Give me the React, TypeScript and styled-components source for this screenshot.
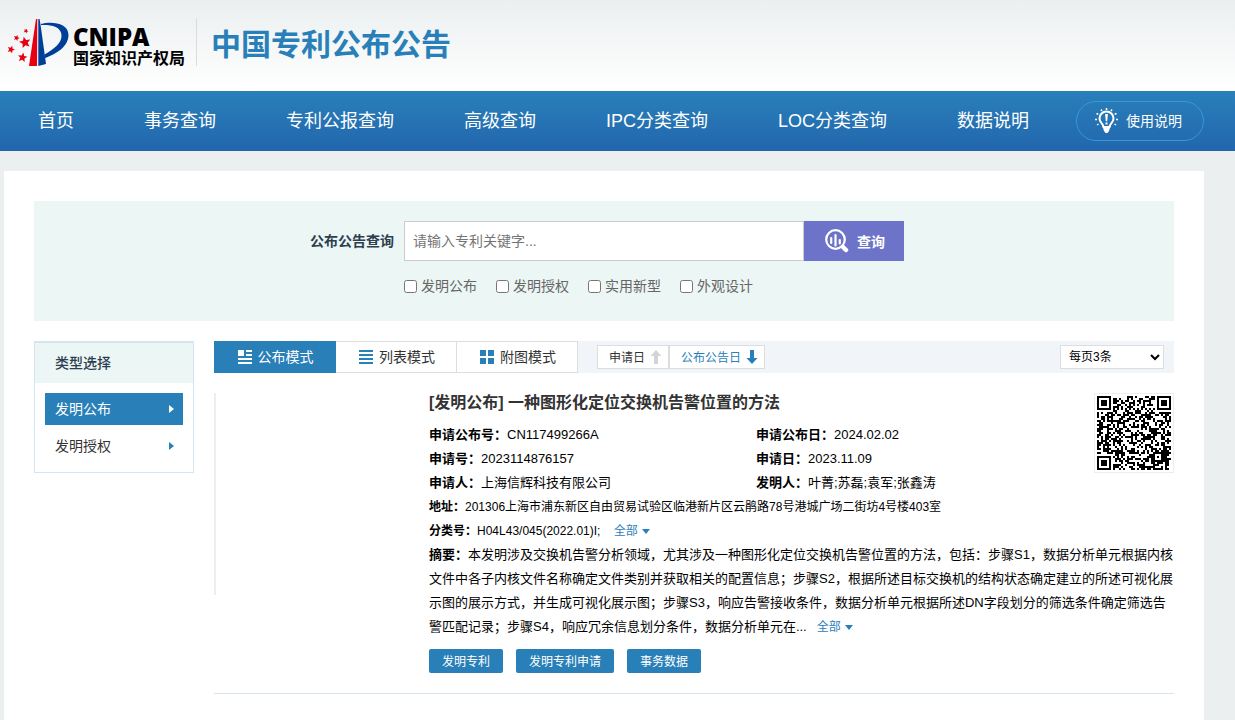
import React from "react";
import styled, { createGlobalStyle } from "styled-components";

const BLUE = "#2980b9";

const GlobalStyle = createGlobalStyle`
  * { box-sizing: border-box; }
  body {
    margin: 0;
    background: #ebeff0;
    color: #000;
    font-family: "Liberation Sans", "Noto Sans CJK SC", sans-serif;
    font-size: 13px;
    line-height: 24px;
  }
  button, input, select { font-family: inherit; }
  a { text-decoration: none; color: inherit; }
`;

const Page = styled.div`
  display: flex;
  flex-direction: column;
  min-height: 100vh;
`;

const Header = styled.header`
  display: flex;
  align-items: flex-start;
  height: 91px;
  padding: 18px 0 0 7px;
  background: linear-gradient(#ebeff0, #fff);
`;

const Logo = styled.div`
  display: flex;
  height: 48px;
  padding-right: 11px;
  border-right: 1px solid #dcdcdc;
`;

const LogoText = styled.div`
  display: flex;
  flex-direction: column;
  margin-left: 4px;
`;

const LogoName = styled.span`
  padding-top: 6px;
  font-family: "Open Sans", sans-serif;
  font-size: 24px;
  font-weight: 800;
  line-height: 26px;
`;

const LogoSub = styled.span`
  font-size: 16px;
  font-weight: 700;
  line-height: 18px;
`;

const SiteTitle = styled.h1`
  margin: 7px 0 0 14px;
  color: ${BLUE};
  font-size: 30px;
  font-weight: 700;
  line-height: 40px;
`;

const Nav = styled.nav`
  display: flex;
  align-items: center;
  justify-content: space-between;
  height: 60px;
  padding: 0 31px 0 38px;
  background: linear-gradient(#2980b9, #2266ad);
  color: #fff;
`;

const NavLinks = styled.div`
  display: flex;
  gap: 70px;
`;

const NavLink = styled.a`
  font-size: 18px;
  line-height: 60px;
  white-space: nowrap;
`;

const HelpLink = styled.a`
  display: flex;
  align-items: center;
  gap: 8px;
  height: 40px;
  padding: 0 21px 0 18px;
  border: 1px solid #3498db;
  border-radius: 20px;
  font-size: 14px;
  white-space: nowrap;
`;

const Main = styled.main`
  flex: 1;
  margin: 20px 31px 0 4px;
  padding: 30px 30px 0;
  background: #fff;
`;

const SearchPanel = styled.form`
  height: 120px;
  padding: 20px 0 0 276px;
  background: #ecf6f5;
`;

const SearchRow = styled.div`
  display: flex;
  align-items: center;
`;

const SearchLabel = styled.label`
  margin-right: 10px;
  color: #2c3e50;
  font-size: 14px;
  font-weight: 700;
`;

const SearchInput = styled.input`
  width: 400px;
  height: 40px;
  padding: 0 8px;
  border: 1px solid #ccc;
  background: #fff;
  font-size: 14px;
  &::placeholder { color: #757575; }
`;

const SearchButton = styled.button`
  display: flex;
  align-items: center;
  justify-content: center;
  gap: 8px;
  width: 100px;
  height: 40px;
  padding: 0 0 0 2px;
  border: 0;
  background: #6c73c8;
  color: #fff;
  font-size: 14px;
  font-weight: 700;
`;

const CheckRow = styled.div`
  display: flex;
  gap: 19px;
  padding: 13px 0 0 94px;
`;

const CheckLabel = styled.label`
  display: flex;
  align-items: center;
  gap: 4px;
  color: #666;
  font-size: 14px;
  input { width: 13px; height: 13px; margin: 0; }
`;

const Columns = styled.div`
  display: flex;
  align-items: flex-start;
  gap: 20px;
  margin-top: 20px;
`;

const Sidebar = styled.aside`
  flex: 0 0 160px;
  border: 1px solid #d4e6f1;
  border-top-width: 2px;
`;

const SideTitle = styled.h2`
  margin: 0;
  padding-left: 20px;
  background: #ecf6f5;
  color: #2c3e50;
  font-size: 14px;
  font-weight: 500;
  line-height: 40px;
`;

const SideList = styled.div`
  display: flex;
  flex-direction: column;
  gap: 5px;
  padding: 10px;
`;

const SideItem = styled.a<{ $active?: boolean }>`
  display: flex;
  align-items: center;
  justify-content: space-between;
  height: 32px;
  padding: 0 9px 0 10px;
  background: ${(p) => (p.$active ? BLUE : "#fff")};
  color: ${(p) => (p.$active ? "#fff" : "#333")};
  font-size: 14px;
  svg { color: ${(p) => (p.$active ? "#fff" : BLUE)}; }
`;

const Results = styled.section`
  flex: 1;
  min-width: 0;
`;

const Toolbar = styled.div`
  display: flex;
  align-items: center;
  height: 32px;
  padding-right: 10px;
  background: #f1f5fa;
`;

const ModeButton = styled.button<{ $active?: boolean }>`
  display: flex;
  align-items: center;
  justify-content: center;
  gap: 6px;
  width: ${(p) => (p.$active ? 122 : 121)}px;
  height: 32px;
  padding: 0 0 2px 2px;
  border: 1px solid ${(p) => (p.$active ? BLUE : "#ddd")};
  border-left-width: 0;
  background: ${(p) => (p.$active ? BLUE : "#fff")};
  color: ${(p) => (p.$active ? "#fff" : "#333")};
  font-size: 14px;
  svg { margin-top: 2px; color: ${(p) => (p.$active ? "#fff" : BLUE)}; }
`;

const SortGroup = styled.div`
  display: flex;
  margin: 0 auto 0 19px;
`;

const SortButton = styled.button<{ $active?: boolean }>`
  display: flex;
  align-items: center;
  gap: 5px;
  height: 24px;
  padding: 0 6px 2px 11px;
  border: 1px solid #ddd;
  background: #fff;
  color: ${(p) => (p.$active ? BLUE : "#333")};
  font-size: 12px;
  svg { margin-top: 2px; color: ${(p) => (p.$active ? BLUE : "#d4d4d4")}; }
`;

const PageSize = styled.select`
  width: 104px;
  height: 24px;
  padding: 0 0 0 4px;
  border: 1px solid #ddd;
  border-radius: 0;
  background: #fff;
  color: #000;
  font-size: 12px;
`;

const Item = styled.article`
  display: flex;
  gap: 13px;
  margin-top: 20px;
  padding-bottom: 20px;
  border-bottom: 1px solid #d9e5ee;
`;

const Drawing = styled.div`
  flex: 0 0 202px;
  height: 202px;
  border-left: 2px solid #eee;
`;

const Body = styled.div`
  flex: 1;
  min-width: 0;
`;

const Head = styled.div`
  display: flex;
  align-items: flex-start;
`;

const HeadText = styled.div`
  flex: 1;
`;

const Title = styled.h3`
  margin: 0;
  padding-bottom: 10px;
  color: #333;
  font-size: 16px;
  font-weight: 700;
  line-height: 20px;
`;

const Fields = styled.dl`
  display: grid;
  grid-template-columns: 59fr 61fr;
  margin: 0;
`;

const Field = styled.div<{ $small?: boolean }>`
  display: flex;
  font-size: ${(p) => (p.$small ? 12 : 13)}px;
  white-space: nowrap;
  dt { font-weight: 700; }
  dd { margin: 0; }
`;

const WideFields = styled.dl`
  margin: 0;
`;

const QrFrame = styled.div`
  width: 80px;
  height: 80px;
  padding: 2px;
  border: 1px solid #eee;
  svg { display: block; }
`;

const Abstract = styled.p`
  margin: 0;
`;

const More = styled.a`
  margin-left: 10px;
  color: ${BLUE};
  font-size: 12px;
  white-space: nowrap;
  svg { margin-left: 4px; vertical-align: 1px; }
`;

const Actions = styled.div`
  display: flex;
  gap: 13px;
  margin-top: 10px;
`;

const Action = styled.button`
  height: 24px;
  padding: 0 13px 2px;
  border: 0;
  border-radius: 2px;
  background: ${BLUE};
  color: #fff;
  font-size: 12px;
`;

const star = (cx: number, cy: number, r: number, turn: number) =>
  Array.from({ length: 10 }, (_, i) => {
    const a = ((i * 36 + turn - 90) * Math.PI) / 180;
    const d = i % 2 ? r * 0.45 : r;
    return `${(cx + d * Math.cos(a)).toFixed(2)},${(cy + d * Math.sin(a)).toFixed(2)}`;
  }).join(" ");

const Emblem = () => (
  <svg width="62" height="49" viewBox="7 18 62 49" aria-hidden="true">
    <g fill="#e60012">
      <path d="M36 19H37.300L37 66H29Z" />
      <polygon points={star(25, 42.5, 6, -12)} />
      <polygon points={star(11, 49.5, 4, 20)} />
      <polygon points={star(22.500, 57.5, 5, 10)} />
      <polygon points={star(16.5, 38, 3.200, 20)} />
      <polygon points={star(26, 31, 2.600, 25)} />
    </g>
    <g fill="#003f98">
      <path d="M38.300 19H39.600L41 28L46 64Q42 65 38.300 66Z" />
      <path d="M41 24C51 21 68.500 22.500 68.500 35C68.500 46 57 54 45 58L44.500 54.500C54 49 62 43 61.500 35C61 26 50 24.500 41 25Z" />
    </g>
  </svg>
);

const BulbIcon = () => (
  <svg width="23" height="26" viewBox="0 0 23 26" fill="none" stroke="#fff" strokeWidth="1.500" aria-hidden="true">
    <path strokeWidth="2" d="M8.500 19C8 15.500 4.500 14.500 4.500 10.500a7 7 0 0 1 14 0c0 4-3.500 5-4 8.500Z" />
    <path d="M7.500 18h8l-1.500 5-1.500 2h-2L9 23Z" fill="#fff" stroke="none" />
    <path d="M10.100 6h2.800l-.7 7.200h-1.400ZM10.500 14.400h2v2h-2Z" fill="#fff" stroke="none" />
    <path d="M11.500 0v2M6 1.500l1 1.500M17 1.500L16 3M1.500 5.500l1.800.8M21.500 5.500l-1.800.8M0 11.500h2M21 11.500H23M2 17l1.500-1M21 17l-1.500-1" />
  </svg>
);

const SearchIcon = () => (
  <svg width="24" height="24" viewBox="0 0 24 24" fill="none" stroke="#fff" aria-hidden="true">
    <circle cx="10.500" cy="10.500" r="9.300" strokeWidth="2.200" />
    <path strokeWidth="4.500" strokeLinecap="round" d="M18 18l3 3" />
    <path strokeWidth="2.200" strokeLinecap="round" d="M6.200 9v5M10.500 6v10.500M14.800 11v3.500" />
  </svg>
);

const ModeIcon = ({ kind }: { kind: "card" | "list" | "grid" }) => {
  const d = {
    card: "M0 0h6v6H0ZM8 0h6v2H8ZM8 4h6v2H8ZM0 8h14v2H0ZM0 12h14v2H0Z",
    list: "M0 0h14v2H0ZM0 4h14v2H0ZM0 8h14v2H0ZM0 12h14v2H0Z",
    grid: "M0 0h6v6H0ZM8 0h6v6H8ZM0 8h6v6H0ZM8 8h6v6H8Z",
  }[kind];
  return (
    <svg width="14" height="14" viewBox="0 0 14 14" fill="currentColor" aria-hidden="true">
      <path d={d} />
    </svg>
  );
};

const SortArrow = ({ down }: { down?: boolean }) => (
  <svg width="12" height="14" viewBox="0 0 12 14" fill="currentColor" aria-hidden="true">
    <path d={down ? "M4 0h4v8h3.500L6 14L.5 8H4Z" : "M4 14h4V6h3.500L6 0L.5 6H4Z"} />
  </svg>
);

const SideArrow = () => (
  <svg width="5" height="8" viewBox="0 0 5 8" fill="currentColor" aria-hidden="true">
    <path d="M0 0l5 4l-5 4Z" />
  </svg>
);

const DownArrow = () => (
  <svg width="8" height="5" viewBox="0 0 8 5" fill="currentColor" aria-hidden="true">
    <path d="M0 0h8L4 5Z" />
  </svg>
);

const QR_SIZE = 37;

const ring = (x: number, y: number, cx: number, cy: number) =>
  Math.max(Math.abs(x - cx), Math.abs(y - cy));

const noise = (x: number, y: number) => {
  let h = Math.imul(x + 11, 374761393) ^ Math.imul(y + 7, 668265263);
  h = Math.imul(h ^ (h >>> 13), 1274126177);
  h = Math.imul(h ^ (h >>> 15), 2246822519);
  return ((h ^ (h >>> 16)) >>> 0) / 4294967296;
};

const qrPath = (() => {
  let d = "";
  for (let y = 0; y < QR_SIZE; y++) {
    for (let x = 0; x < QR_SIZE; x++) {
      let dark = noise(x, y) < 0.52;
      const finder = Math.min(
        ring(x, y, 3, 3),
        ring(x, y, QR_SIZE - 4, 3),
        ring(x, y, 3, QR_SIZE - 4)
      );
      const align = ring(x, y, 30, 30);
      if (finder <= 4) dark = finder < 2 || finder === 3;
      else if (align <= 2) dark = align !== 1;
      else if (x === 6 || y === 6) dark = (x + y) % 2 === 0;
      if (dark) d += `M${x} ${y}h1v1h-1Z`;
    }
  }
  return d;
})();

const QrCode = () => (
  <svg width="74" height="74" viewBox="0 0 37 37" shapeRendering="crispEdges" role="img" aria-label="二维码">
    <path d={qrPath} />
  </svg>
);

const navItems = ["首页", "事务查询", "专利公报查询", "高级查询", "IPC分类查询", "LOC分类查询", "数据说明"];
const kinds = ["发明公布", "发明授权", "实用新型", "外观设计"];
const fields = [
  ["申请公布号：", "CN117499266A"],
  ["申请公布日：", "2024.02.02"],
  ["申请号：", "2023114876157"],
  ["申请日：", "2023.11.09"],
  ["申请人：", "上海信辉科技有限公司"],
  ["发明人：", "叶菁;苏磊;袁军;张鑫涛"],
];

export default function App() {
  return (
    <Page>
      <GlobalStyle />
      <Header>
        <Logo>
          <Emblem />
          <LogoText>
            <LogoName>CNIPA</LogoName>
            <LogoSub>国家知识产权局</LogoSub>
          </LogoText>
        </Logo>
        <SiteTitle>中国专利公布公告</SiteTitle>
      </Header>
      <Nav>
        <NavLinks>
          {navItems.map((t) => (
            <NavLink href="#" key={t}>{t}</NavLink>
          ))}
        </NavLinks>
        <HelpLink href="#">
          <BulbIcon />
          使用说明
        </HelpLink>
      </Nav>
      <Main>
        <SearchPanel>
          <SearchRow>
            <SearchLabel htmlFor="keyword">公布公告查询</SearchLabel>
            <SearchInput id="keyword" type="text" placeholder="请输入专利关键字..." />
            <SearchButton type="button">
              <SearchIcon />
              查询
            </SearchButton>
          </SearchRow>
          <CheckRow>
            {kinds.map((t) => (
              <CheckLabel key={t}>
                <input type="checkbox" />
                {t}
              </CheckLabel>
            ))}
          </CheckRow>
        </SearchPanel>
        <Columns>
          <Sidebar>
            <SideTitle>类型选择</SideTitle>
            <SideList>
              <SideItem href="#" $active>发明公布<SideArrow /></SideItem>
              <SideItem href="#">发明授权<SideArrow /></SideItem>
            </SideList>
          </Sidebar>
          <Results>
            <Toolbar>
              <ModeButton $active><ModeIcon kind="card" />公布模式</ModeButton>
              <ModeButton><ModeIcon kind="list" />列表模式</ModeButton>
              <ModeButton><ModeIcon kind="grid" />附图模式</ModeButton>
              <SortGroup>
                <SortButton>申请日<SortArrow /></SortButton>
                <SortButton $active>公布公告日<SortArrow down /></SortButton>
              </SortGroup>
              <PageSize aria-label="每页条数" defaultValue="3">
                <option value="3">每页3条</option>
                <option value="10">每页10条</option>
              </PageSize>
            </Toolbar>
            <Item>
              <Drawing />
              <Body>
                <Head>
                  <HeadText>
                    <Title>[发明公布] 一种图形化定位交换机告警位置的方法</Title>
                    <Fields>
                      {fields.map(([name, value]) => (
                        <Field key={name}>
                          <dt>{name}</dt>
                          <dd>{value}</dd>
                        </Field>
                      ))}
                    </Fields>
                  </HeadText>
                  <QrFrame><QrCode /></QrFrame>
                </Head>
                <WideFields>
                  <Field $small>
                    <dt>地址：</dt>
                    <dd>201306上海市浦东新区自由贸易试验区临港新片区云鹃路78号港城广场二街坊4号楼403室</dd>
                  </Field>
                  <Field $small>
                    <dt>分类号：</dt>
                    <dd>H04L43/045(2022.01)I; <More href="#">全部<DownArrow /></More></dd>
                  </Field>
                </WideFields>
                <Abstract>
                  <b>摘要：</b>本发明涉及交换机告警分析领域，尤其涉及一种图形化定位交换机告警位置的方法，包括：步骤S1，数据分析单元根据内核文件中各子内核文件名称确定文件类别并获取相关的配置信息；步骤S2，根据所述目标交换机的结构状态确定建立的所述可视化展示图的展示方式，并生成可视化展示图；步骤S3，响应告警接收条件，数据分析单元根据所述DN字段划分的筛选条件确定筛选告警匹配记录；步骤S4，响应冗余信息划分条件，数据分析单元在...
                  <More href="#">全部<DownArrow /></More>
                </Abstract>
                <Actions>
                  <Action>发明专利</Action>
                  <Action>发明专利申请</Action>
                  <Action>事务数据</Action>
                </Actions>
              </Body>
            </Item>
          </Results>
        </Columns>
      </Main>
    </Page>
  );
}
